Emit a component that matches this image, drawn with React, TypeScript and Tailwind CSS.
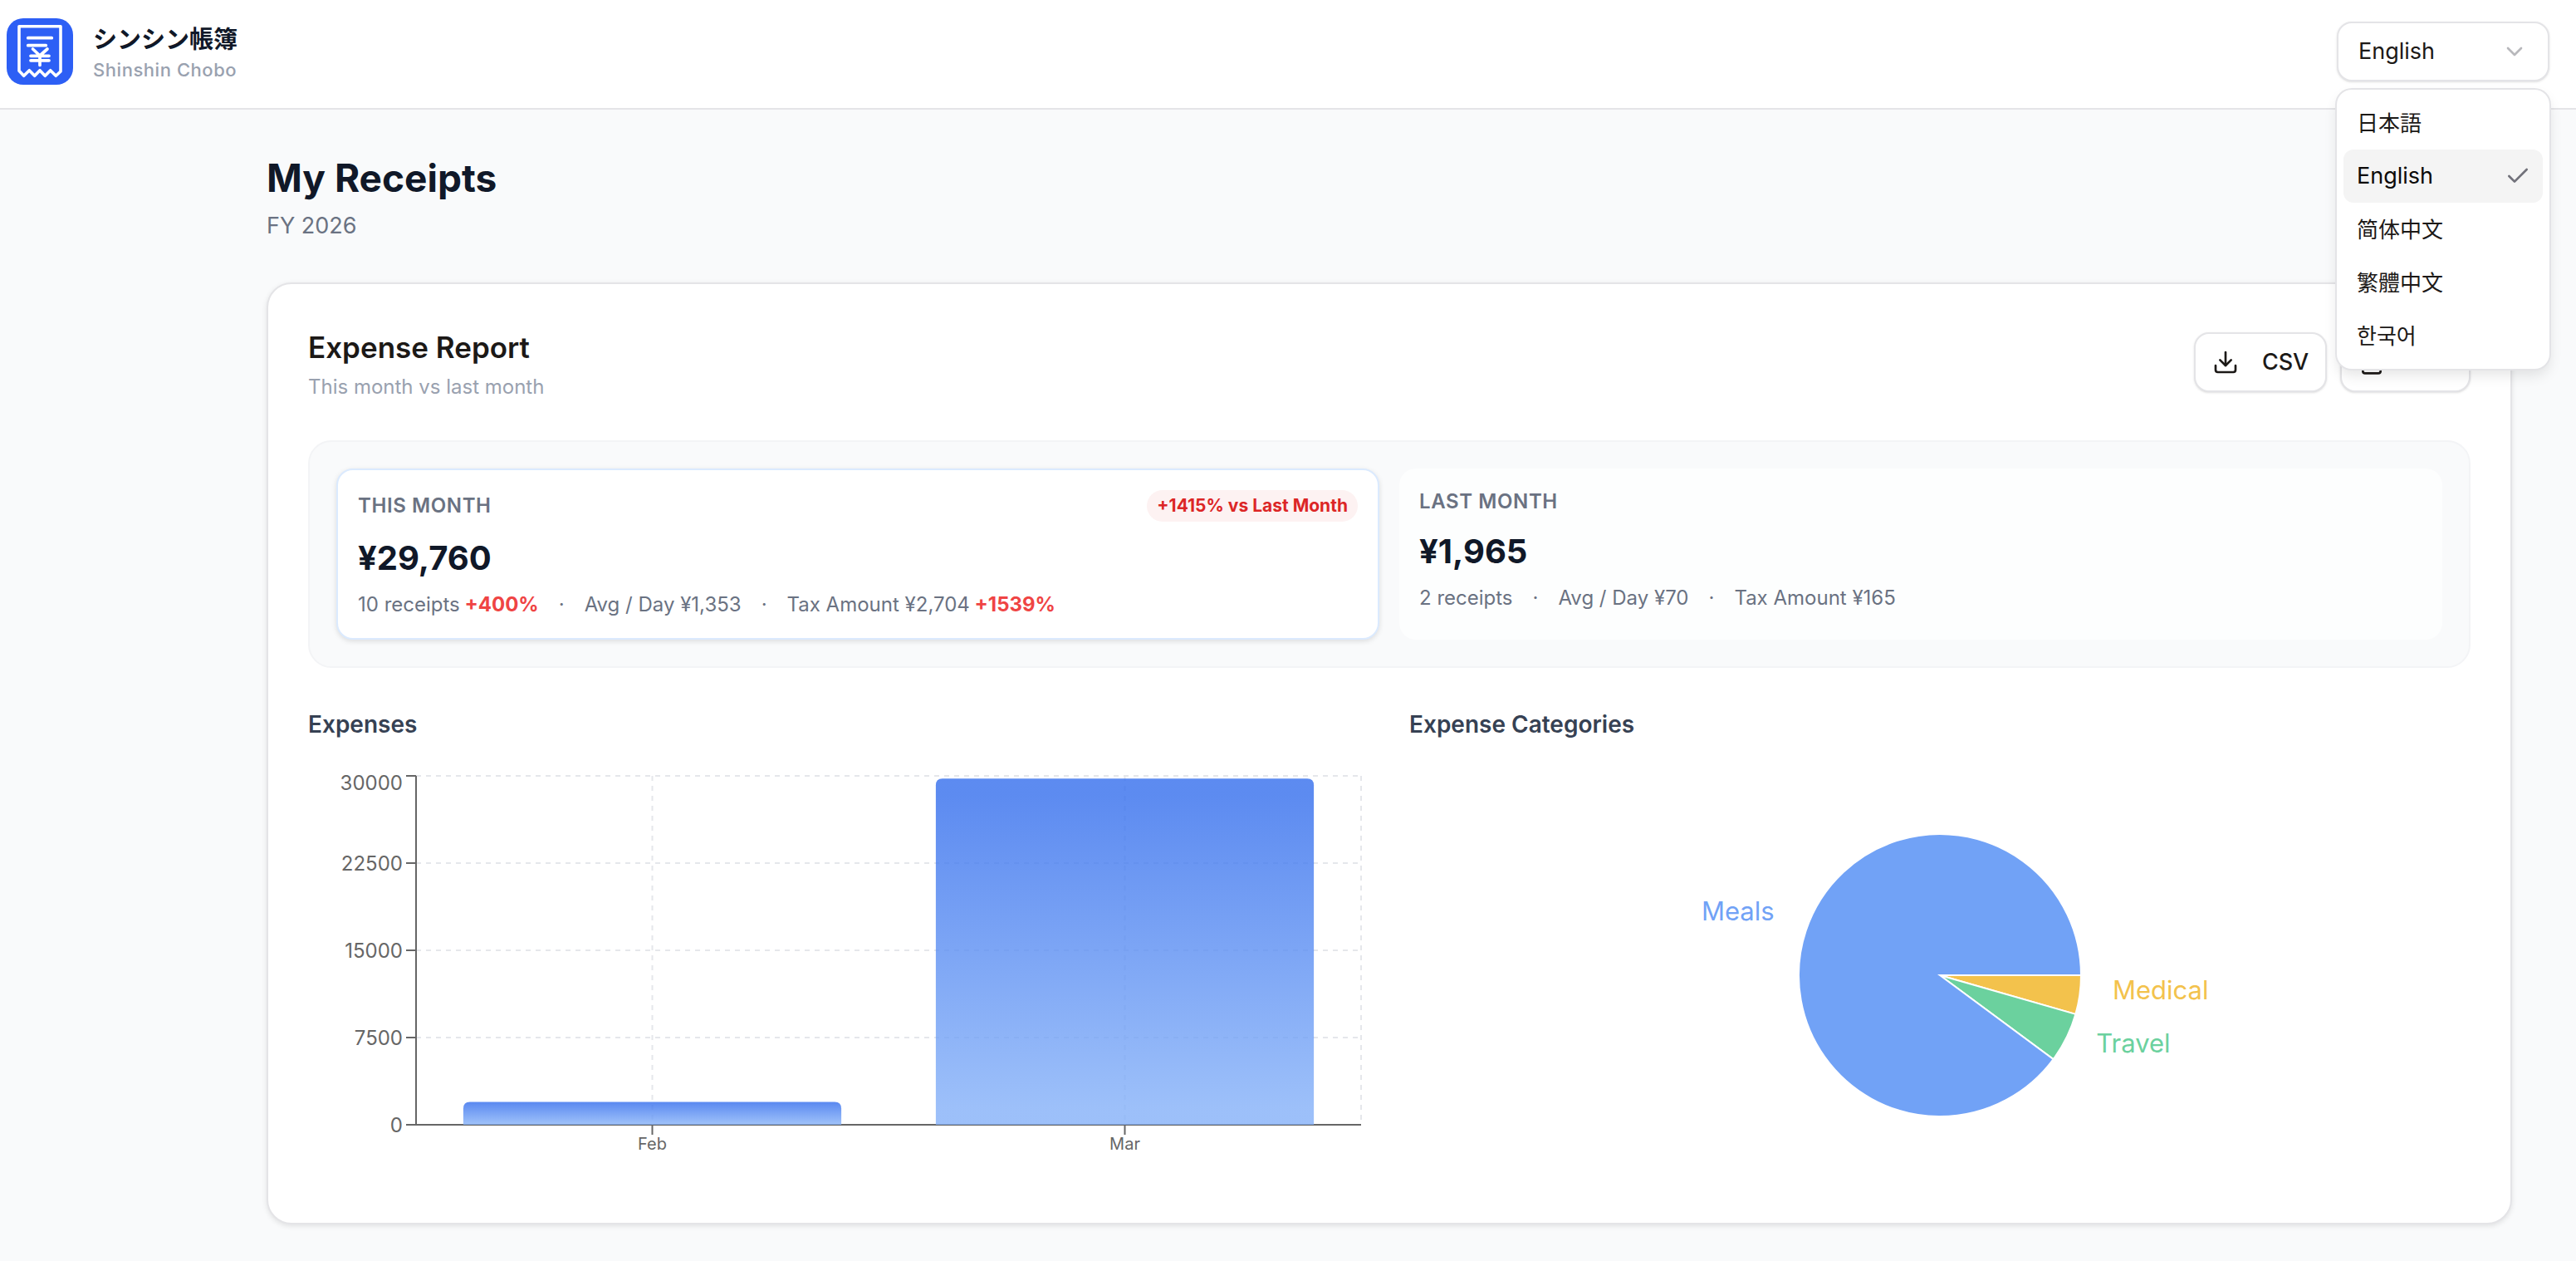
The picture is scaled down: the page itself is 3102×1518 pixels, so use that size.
import { useLayoutEffect, useRef, useState } from "react";
import type { ReactNode } from "react";
import { Check, ChevronDown, Download, FileText } from "lucide-react";

const BRAND = "#2d5ff5";

function useWidth() {
  const ref = useRef<HTMLDivElement>(null);
  const [width, setWidth] = useState(0);
  useLayoutEffect(() => {
    const el = ref.current;
    if (!el) return;
    const update = () => setWidth(el.clientWidth);
    update();
    const observer = new ResizeObserver(update);
    observer.observe(el);
    return () => observer.disconnect();
  }, []);
  return { ref, width };
}

function Logo() {
  return (
    <svg viewBox="0 0 80 80" className="size-20 shrink-0" role="img" aria-label="Shinshin Chobo logo" fill="none">
      <rect width="80" height="80" rx="20" fill={BRAND} />
      <path
        d="M15 9.7H65V64L59.3 69.3L52.7 62.7L46.3 69.3L40 62.7L33.7 69.3L27.3 62.7L20.7 69.3L15 63.3Z"
        stroke="white"
        strokeWidth="3.6"
        strokeLinejoin="round"
      />
      <path
        d="M25.7 23.7H54.3M25.7 32.7H47.3M31.5 37L40 45L49 37M40 45V56.5M29 45.3H51M29 50.8H51"
        stroke="white"
        strokeWidth="3.7"
        strokeLinecap="round"
        strokeLinejoin="round"
      />
    </svg>
  );
}

const languages = [
  { code: "ja", label: "日本語", font: "text-[26px] font-['Inter','Noto_Sans_CJK_JP',sans-serif]" },
  { code: "en", label: "English", font: "text-[27px] font-['Inter',sans-serif]" },
  { code: "zh-Hans", label: "简体中文", font: "text-[26px] font-['Inter','Noto_Sans_CJK_SC',sans-serif]" },
  { code: "zh-Hant", label: "繁體中文", font: "text-[26px] font-['Inter','Noto_Sans_CJK_TC',sans-serif]" },
  { code: "ko", label: "한국어", font: "text-[26px] font-['Inter','Noto_Sans_CJK_KR',sans-serif]" },
];

function LanguageSelect() {
  const [open, setOpen] = useState(true);
  const [selected, setSelected] = useState("en");
  const current = languages.find((l) => l.code === selected)!;
  return (
    <div className="relative w-64">
      <button
        type="button"
        aria-haspopup="listbox"
        aria-expanded={open}
        aria-label="Language"
        onClick={() => setOpen(!open)}
        className="flex h-18 w-full items-center justify-between rounded-[18px] border-2 border-[#e4e4e7] bg-white px-6 text-[27px] text-[#1c1917] shadow-sm"
      >
        {current.label}
        <ChevronDown className="size-8 text-[#b8b8bc]" strokeWidth={2} />
      </button>
      {open && (
        <div
          role="listbox"
          aria-label="Language"
          className="absolute inset-x-0 top-full z-10 mt-[10px] flex flex-col rounded-[18px] bg-white p-2 shadow-[0_8px_16px_rgba(0,0,0,0.1)] ring-2 ring-[#e4e4e7]"
        >
          {languages.map((l) => (
            <button
              key={l.code}
              type="button"
              role="option"
              lang={l.code}
              aria-selected={l.code === selected}
              onClick={() => {
                setSelected(l.code);
                setOpen(false);
              }}
              className={`flex h-16 items-center justify-between rounded-xl pr-3.5 pl-4 text-left ${l.font} ${
                l.code === selected ? "bg-[#f4f4f4] text-[#0c0a09]" : "bg-white text-[#1c1917]"
              }`}
            >
              {l.label}
              {l.code === selected && <Check className="size-8 text-[#71717a]" strokeWidth={2} />}
            </button>
          ))}
        </div>
      )}
    </div>
  );
}

function ExportButton({ icon, children }: { icon: ReactNode; children: ReactNode }) {
  return (
    <button
      type="button"
      className="flex h-18 items-center gap-7 rounded-[18px] border-2 border-[#e4e4e7] bg-white px-5 text-[27px] font-medium text-[#1c1917] shadow-sm"
    >
      {icon}
      {children}
    </button>
  );
}

type Stat = { label: string; change?: string };

function PeriodCard({
  title,
  amount,
  stats,
  badge,
  highlighted = false,
}: {
  title: string;
  amount: string;
  stats: Stat[];
  badge?: string;
  highlighted?: boolean;
}) {
  return (
    <section
      className={
        highlighted
          ? "rounded-[20px] border-2 border-[#dbeafe] bg-white p-6 shadow-[0_2px_6px_rgba(0,0,0,0.12)]"
          : "rounded-[20px] bg-white/70 p-6"
      }
    >
      <div className="flex items-center justify-between">
        <h3 className="text-[24px] leading-8 font-semibold tracking-wide text-[#6a7282] uppercase">{title}</h3>
        {badge && (
          <span className="rounded-[19px] bg-[#fdf2f2] px-3 text-[21px] leading-[38px] font-bold text-[#dc2626]">
            {badge}
          </span>
        )}
      </div>
      <p className="mt-5 text-[40px] leading-12 font-bold text-[#101828]">{amount}</p>
      <ul className="mt-4 flex text-[24px] leading-8 text-[#6a7282]">
        {stats.map((s, i) => (
          <li key={s.label} className="flex">
            {i > 0 && (
              <span aria-hidden="true" className="px-6">
                ·
              </span>
            )}
            <span>
              {s.label}
              {s.change && <strong className="font-bold text-[#ef4444]"> {s.change}</strong>}
            </span>
          </li>
        ))}
      </ul>
    </section>
  );
}

const CHART_HEIGHT = 500;
const expenses = [
  { month: "Feb", value: 1965 },
  { month: "Mar", value: 29760 },
];

function ExpensesChart() {
  const { ref, width } = useWidth();
  const left = 130;
  const right = width - 10;
  const top = 10;
  const bottom = 430;
  const max = 30000;
  const band = (right - left) / expenses.length;
  const y = (v: number) => bottom - ((bottom - top) * v) / max;
  return (
    <div ref={ref} className="h-[500px]">
      {width > 0 && (
        <svg width={width} height={CHART_HEIGHT} role="img" aria-label="Expenses by month" className="block">
          <defs>
            <linearGradient id="bar" x1="0" y1="0" x2="0" y2="1">
              <stop offset="5%" stopColor="#346eed" stopOpacity="0.8" />
              <stop offset="95%" stopColor="#84b0f8" stopOpacity="0.8" />
            </linearGradient>
          </defs>
          <g stroke="#e5e7eb" strokeWidth="2" strokeDasharray="6 6">
            {[7500, 15000, 22500, 30000].map((v) => (
              <line key={v} x1={left} x2={right} y1={y(v)} y2={y(v)} />
            ))}
            {expenses.map((e, i) => (
              <line key={e.month} x1={left + band * (i + 0.5)} x2={left + band * (i + 0.5)} y1={top} y2={bottom} />
            ))}
            <line x1={right} x2={right} y1={top} y2={bottom} />
          </g>
          <g stroke="#666666" strokeWidth="2">
            <line x1={left} x2={left} y1={top} y2={bottom} />
            <line x1={left} x2={right} y1={bottom} y2={bottom} />
            {[0, 7500, 15000, 22500, 30000].map((v) => (
              <line key={v} x1={left - 12} x2={left} y1={y(v)} y2={y(v)} />
            ))}
            {expenses.map((e, i) => (
              <line
                key={e.month}
                x1={left + band * (i + 0.5)}
                x2={left + band * (i + 0.5)}
                y1={bottom}
                y2={bottom + 12}
              />
            ))}
          </g>
          {expenses.map((e, i) => {
            const x0 = left + band * (i + 0.1);
            const x1 = left + band * (i + 0.9);
            const t = y(e.value);
            return (
              <path
                key={e.month}
                fill="url(#bar)"
                d={`M${x0} ${bottom}V${t + 8}Q${x0} ${t} ${x0 + 8} ${t}H${x1 - 8}Q${x1} ${t} ${x1} ${t + 8}V${bottom}Z`}
              />
            );
          })}
          <g fill="#666666" fontSize="24" textAnchor="end">
            {[0, 7500, 15000, 22500].map((v) => (
              <text key={v} x={left - 16} y={y(v) + 9}>
                {v}
              </text>
            ))}
            <text x={left - 16} y={top + 17}>
              {max}
            </text>
          </g>
          <g fill="#666666" fontSize="20" textAnchor="middle">
            {expenses.map((e, i) => (
              <text key={e.month} x={left + band * (i + 0.5)} y={bottom + 30}>
                {e.month}
              </text>
            ))}
          </g>
        </svg>
      )}
    </div>
  );
}

const categories = [
  { name: "Medical", from: 0, to: 16, color: "#f3c24c" },
  { name: "Travel", from: 16, to: 36.5, color: "#6bd19e" },
  { name: "Meals", from: 36.5, to: 360, color: "#71a2f6" },
];

function CategoriesChart() {
  const { ref, width } = useWidth();
  const cx = width / 2;
  const cy = CHART_HEIGHT / 2;
  const point = (deg: number, r: number) => {
    const a = (deg * Math.PI) / 180;
    return { x: cx + r * Math.cos(a), y: cy + r * Math.sin(a) };
  };
  return (
    <div ref={ref} className="h-[500px]">
      {width > 0 && (
        <svg width={width} height={CHART_HEIGHT} role="img" aria-label="Expense categories" className="block">
          {categories.map((c) => {
            const a = point(c.from, 170);
            const b = point(c.to, 170);
            const large = c.to - c.from > 180 ? 1 : 0;
            const label = point((c.from + c.to) / 2, 210);
            return (
              <g key={c.name} fill={c.color}>
                <path
                  d={`M${cx} ${cy}L${a.x} ${a.y}A170 170 0 ${large} 1 ${b.x} ${b.y}Z`}
                  stroke="white"
                  strokeWidth="2"
                />
                <text x={label.x} y={label.y} fontSize="31" textAnchor={label.x > cx ? "start" : "end"}>
                  {c.name}
                </text>
              </g>
            );
          })}
        </svg>
      )}
    </div>
  );
}

export default function App() {
  return (
    <div className="min-h-screen bg-[#f9fafb] font-['Inter','Noto_Sans_CJK_JP',sans-serif]">
      <header className="flex items-center justify-between border-b-2 border-[#e4e4e7] bg-white pt-[22px] pr-8 pb-7 pl-2">
        <a href="#" className="flex items-center gap-6">
          <Logo />
          <span className="flex flex-col pt-2">
            <span className="text-[29px] leading-9 font-bold text-[#101828]">シンシン帳簿</span>
            <span className="text-[22px] leading-9 font-medium tracking-wide text-[#99a1af]">Shinshin Chobo</span>
          </span>
        </a>
        <LanguageSelect />
      </header>

      <main className="flex flex-col pt-13 pr-[77px] pb-11 pl-[321px]">
        <h1 className="text-[46px] leading-15 font-bold text-[#101828]">My Receipts</h1>
        <p className="mt-2 text-[27px] leading-10 text-[#6a7282]">FY 2026</p>

        <div className="mt-12 rounded-[30px] border-2 border-[#e4e4e7] bg-white p-12 shadow-[0_2px_6px_rgba(0,0,0,0.1)]">
          <div className="flex items-center justify-between">
            <div>
              <h2 className="text-[35px] leading-14 font-semibold text-[#1c1917]">Expense Report</h2>
              <p className="mt-1 text-[24px] leading-8 text-[#99a1af]">This month vs last month</p>
            </div>
            <div className="flex gap-4">
              <ExportButton icon={<Download className="size-8" />}>CSV</ExportButton>
              <ExportButton icon={<FileText className="size-8" />}>PDF</ExportButton>
            </div>
          </div>

          <div className="mt-12 grid grid-cols-2 gap-6 rounded-[28px] border-2 border-[#f3f4f6] bg-[#f9fafb] p-8">
            <PeriodCard
              highlighted
              title="This Month"
              badge="+1415% vs Last Month"
              amount="¥29,760"
              stats={[
                { label: "10 receipts", change: "+400%" },
                { label: "Avg / Day ¥1,353" },
                { label: "Tax Amount ¥2,704", change: "+1539%" },
              ]}
            />
            <PeriodCard
              title="Last Month"
              amount="¥1,965"
              stats={[{ label: "2 receipts" }, { label: "Avg / Day ¥70" }, { label: "Tax Amount ¥165" }]}
            />
          </div>

          <div className="mt-12 grid grid-cols-2 gap-12">
            <section>
              <h3 className="mb-8 text-[28px] leading-10 font-semibold text-[#364153]">Expenses</h3>
              <ExpensesChart />
            </section>
            <section>
              <h3 className="mb-8 text-[28px] leading-10 font-semibold text-[#364153]">Expense Categories</h3>
              <CategoriesChart />
            </section>
          </div>
        </div>
      </main>
    </div>
  );
}
